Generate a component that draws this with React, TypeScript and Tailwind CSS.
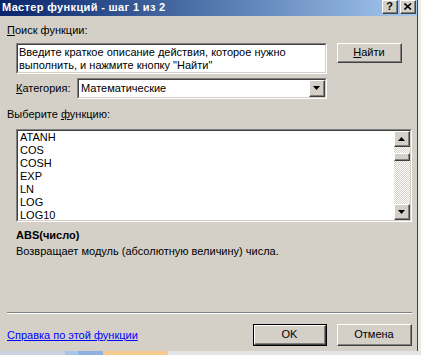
import React from "react";

const items = ["ATANH", "COS", "COSH", "EXP", "LN", "LOG", "LOG10"];

function Arrow({ up }: { up?: boolean }) {
  return (
    <svg width="7" height="4" viewBox="0 0 7 4">
      <path d={up ? "M3.5 0 L7 4 L0 4 Z" : "M0 0 L7 0 L3.5 4 Z"} fill="#000" />
    </svg>
  );
}

// raised 3d box (buttons, scroll arrows)
function Raised({ className, children }: { className?: string; children?: React.ReactNode }) {
  return (
    <div className={`border-t border-l border-white border-r border-b border-r-[#404040] border-b-[#404040] bg-[#d4d0c8] ${className ?? ""}`}>
      <div className="flex h-full w-full items-center justify-center border-r border-b border-[#808080]">{children}</div>
    </div>
  );
}

// sunken 3d box (edits, lists)
function Sunken({ className, children }: { className?: string; children?: React.ReactNode }) {
  return (
    <div className={`border-t border-l border-[#808080] border-r border-b border-r-white border-b-white ${className ?? ""}`}>
      <div className="flex h-full w-full border-t border-l border-[#404040] border-r border-b border-r-[#d4d0c8] border-b-[#d4d0c8] bg-white">
        {children}
      </div>
    </div>
  );
}

export default function App() {
  return (
    <div className="flex h-[355px] w-[421px] flex-col overflow-hidden bg-[#ecebe6] font-['Liberation_Sans',Arial,sans-serif] text-[11px] leading-[13px] text-black">
      <div className="flex h-[351px]">
        <div className="flex h-full w-[418px] flex-col border-r border-[#404040] bg-[#d4d0c8]">
          {/* Title bar */}
          <div className="flex h-[16px] items-start justify-between bg-linear-to-r from-[#0a246a] to-[#a6caf0] pl-[2px] pr-[1px]">
            <span className="mt-[1px] text-[11px] font-bold tracking-[0.35px] text-white">Мастер функций - шаг 1 из 2</span>
            <div className="flex gap-[2px]">
              <Raised className="h-[14px] w-[16px]">
                <span className="text-[11px] font-bold leading-[11px]">?</span>
              </Raised>
              <Raised className="h-[14px] w-[16px]">
                <svg width="8" height="7" viewBox="0 0 8 7">
                  <path d="M0.5 0.5 L7 6.5 M7 0.5 L0.5 6.5" stroke="#000" strokeWidth="1.6" />
                </svg>
              </Raised>
            </div>
          </div>

          <div className="flex flex-col pl-[7px]">
            <div className="mt-[8px]">
              <u>П</u>оиск функции:
            </div>

            <div className="mt-[6px] flex items-start">
              <Sunken className="ml-[9px] h-[31px] w-[311px]">
                <div className="pl-[1px] pt-[1px]">
                  Введите краткое описание действия, которое нужно
                  <br />
                  выполнить, и нажмите кнопку "Найти"
                </div>
              </Sunken>
              <Raised className="ml-[10px] h-[20px] w-[65px]">
                <span>
                  <u>Н</u>айти
                </span>
              </Raised>
            </div>

            <div className="mt-[4px] flex items-center">
              <span className="ml-[9px] w-[61px]">
                <u>К</u>атегория:
              </span>
              <Sunken className="h-[21px] w-[250px]">
                <div className="flex flex-1 items-center justify-between">
                  <span className="pl-[2px]">Математические</span>
                  <Raised className="h-[17px] w-[16px]">
                    <Arrow />
                  </Raised>
                </div>
              </Sunken>
            </div>

            <div className="mt-[9px]">
              Выберите <u>ф</u>ункцию:
            </div>

            <Sunken className="ml-[9px] mt-[8px] h-[93px] w-[396px]">
              <div className="flex-1 pl-[2px]">
                {items.map((it) => (
                  <div key={it}>{it}</div>
                ))}
              </div>
              <div className="flex w-[16px] flex-col">
                <Raised className="h-[16px] w-[16px]">
                  <Arrow up />
                </Raised>
                <div className="flex-1 bg-[repeating-conic-gradient(#ffffff_0_25%,#d4d0c8_0_50%)] bg-[length:2px_2px] pt-[6px]">
                  <Raised className="h-[8px] w-[16px]" />
                </div>
                <Raised className="h-[16px] w-[16px]">
                  <Arrow />
                </Raised>
              </div>
            </Sunken>

            <div className="ml-[9px] mt-[7px] font-bold">ABS(число)</div>
            <div className="ml-[9px] mt-[3px]">Возвращает модуль (абсолютную величину) числа.</div>

            <div className="mt-[54px] h-[2px] w-[405px] border-t border-b border-t-[#808080] border-b-white" />

            <div className="mt-[10px] flex h-[22px] items-center">
              <a href="#" className="text-[#0000ff] underline">
                Справка по этой функции
              </a>
              <div className="flex-1" />
              <div className="border border-black">
                <Raised className="h-[20px] w-[72px]">OK</Raised>
              </div>
              <Raised className="ml-[10px] mr-[5px] h-[22px] w-[75px]">Отмена</Raised>
            </div>
          </div>
        </div>
      </div>

      {/* desktop peeking below the dialog */}
      <div className="flex h-[4px]">
        <div className="w-[65px] bg-[#c9d3e2]" />
        <div className="w-[13px] bg-[#a9c3ea]" />
        <div className="w-[25px] bg-[#8fb0e0]" />
        <div className="w-[65px] bg-[#f6c98e]" />
        <div className="flex-1 bg-[#e4e4e4]" />
      </div>
    </div>
  );
}
